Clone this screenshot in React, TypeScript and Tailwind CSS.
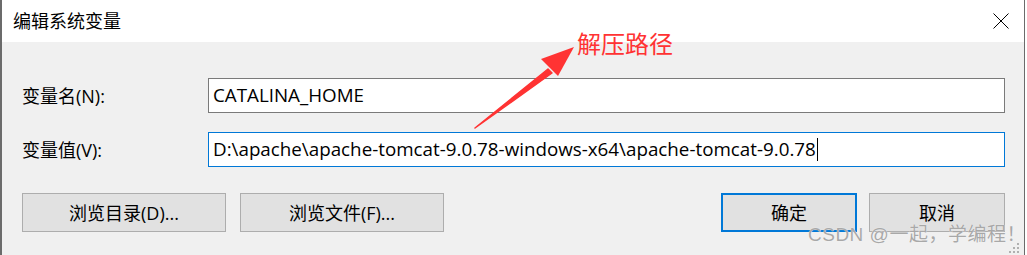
import React from 'react';

// Fuente de la interfaz: latín tipo Segoe y CJK para el chino.
const uiFont = { fontFamily: '"Open Sans", "Noto Sans CJK SC", sans-serif' };

const Field: React.FC<{ label: string; value: string; focused?: boolean }> = ({ label, value, focused }) => (
    <div className="flex items-center h-[35px]">
        <div className="w-[186px] text-[18px] text-black leading-none">{label}</div>
        <div
            className={`flex items-center h-[35px] w-[797px] bg-white px-[4px] text-[18.8px] text-black leading-none ${
                focused ? 'border border-[#0078d7]' : 'border border-[#7a7a7a]'
            }`}
        >
            <span className="whitespace-nowrap">{value}</span>
            {focused && <span className="ml-[1px] w-[1px] h-[23px] bg-black" />}
        </div>
    </div>
);

const Btn: React.FC<{ text: string; w: string; primary?: boolean }> = ({ text, w, primary }) => (
    <button
        className={`h-[39px] ${w} bg-[#e1e1e1] text-[18px] text-black leading-none ${
            primary ? 'border-2 border-[#0078d7]' : 'border border-[#adadad]'
        }`}
    >
        {text}
    </button>
);

export default function App() {
    return (
        <div className="relative w-[1027px] h-[255px] bg-white overflow-hidden" style={uiFont}>
            {/* Ventana del diálogo */}
            <div className="flex flex-col w-[1025px] h-[255px] border-l-2 border-r border-[#6b6b6b]">
                {/* Barra de título */}
                <div className="flex items-center justify-between h-[42px] bg-white pl-[11px] pr-[14px]">
                    <span className="text-[18px] text-black">编辑系统变量</span>
                    <svg width="16" height="16" viewBox="0 0 16 16" className="mr-[1px]">
                        <path d="M0.5 0.5 L15.5 15.5 M15.5 0.5 L0.5 15.5" stroke="#000" strokeWidth="1" />
                    </svg>
                </div>

                {/* Contenido */}
                <div className="flex-1 bg-[#f0f0f0] pl-[20px] pt-[36px]">
                    <div className="flex flex-col gap-[19px]">
                        <Field label="变量名(N):" value="CATALINA_HOME" />
                        <Field
                            label="变量值(V):"
                            value="D:\apache\apache-tomcat-9.0.78-windows-x64\apache-tomcat-9.0.78"
                            focused
                        />
                    </div>
                    <div className="flex items-center mt-[26px] w-[983px]">
                        <Btn text="浏览目录(D)..." w="w-[204px]" />
                        <div className="ml-[14px]">
                            <Btn text="浏览文件(F)..." w="w-[204px]" />
                        </div>
                        <div className="ml-auto flex gap-[12px]">
                            <Btn text="确定" w="w-[136px]" primary />
                            <Btn text="取消" w="w-[136px]" />
                        </div>
                    </div>
                </div>
            </div>

            {/* Anotación roja */}
            <svg className="absolute left-0 top-0 pointer-events-none" width="1027" height="255">
                <path d="M475 128 L548 69 L552 73 Z" fill="#f33" stroke="#f33" strokeWidth="1.5" strokeLinejoin="round" />
                <path d="M574 47 L541 59 L558 76 Z" fill="#f33" />
            </svg>
            <span className="absolute left-[577px] top-[26px] text-[24px] text-[#f33] leading-normal">解压路径</span>

            {/* Marca de agua */}
            <span
                className="absolute left-[808px] top-[221px] text-[19px] tracking-[0.5px] text-[#a8a8a8] leading-normal whitespace-nowrap"
                style={{ textShadow: '0 0 1px #fff', fontFamily: '"Liberation Sans", "Noto Sans CJK SC", sans-serif' }}
            >
                CSDN @一起，学编程！
            </span>
            {/* Agarre de redimensión */}
            <svg className="absolute left-[1009px] top-[243px]" width="12" height="12">
                {[[8, 0], [4, 4], [8, 4], [0, 8], [4, 8], [8, 8]].map(([x, y]) => (
                    <rect key={`${x}-${y}`} x={x} y={y} width="2" height="2" fill="#b0b0b0" />
                ))}
            </svg>
        </div>
    );
}
